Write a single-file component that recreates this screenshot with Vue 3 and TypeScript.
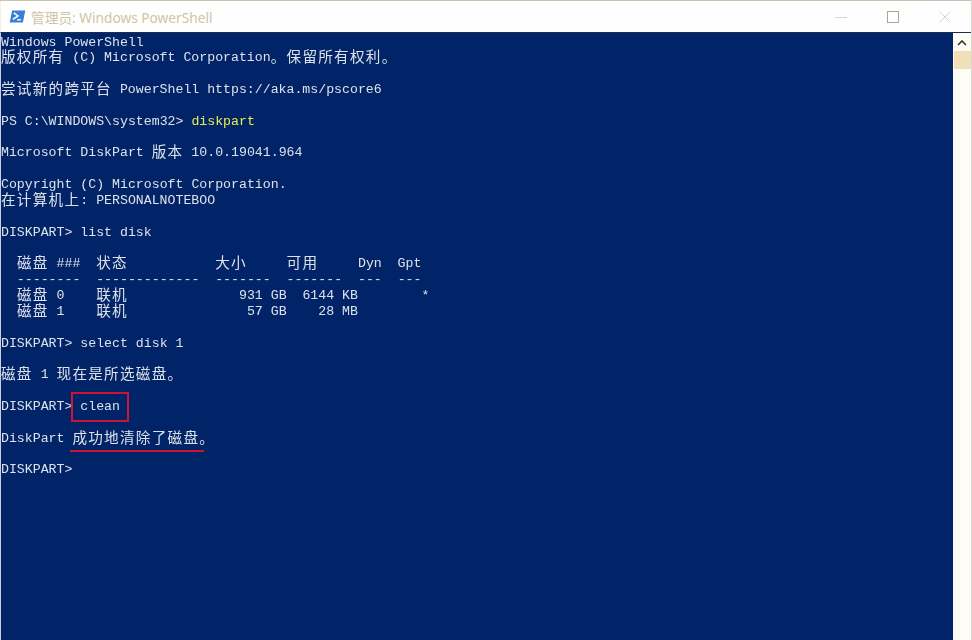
<script setup lang="ts">
type Run = { t: string; cjk?: boolean; y?: boolean };
const raw: string[] = [
  "Windows PowerShell",
  "版权所有 (C) Microsoft Corporation。保留所有权利。",
  "",
  "尝试新的跨平台 PowerShell https://aka.ms/pscore6",
  "",
  "PS C:\\WINDOWS\\system32> §diskpart",
  "",
  "Microsoft DiskPart 版本 10.0.19041.964",
  "",
  "Copyright (C) Microsoft Corporation.",
  "在计算机上: PERSONALNOTEBOO",
  "",
  "DISKPART> list disk",
  "",
  "  磁盘 ###  状态           大小     可用     Dyn  Gpt",
  "  --------  -------------  -------  -------  ---  ---",
  "  磁盘 0    联机              931 GB  6144 KB        *",
  "  磁盘 1    联机               57 GB    28 MB",
  "",
  "DISKPART> select disk 1",
  "",
  "磁盘 1 现在是所选磁盘。",
  "",
  "DISKPART> clean",
  "",
  "DiskPart 成功地清除了磁盘。",
  "",
  "DISKPART>",
];
function parse(line: string): Run[] {
  const runs: Run[] = [];
  let yellow = false;
  for (const part of line.split(/(§|[\u3000-\u303f\u4e00-\u9fff]+)/)) {
    if (!part) continue;
    if (part === "§") { yellow = true; continue; }
    runs.push({ t: part, cjk: /^[\u3000-\u303f\u4e00-\u9fff]/.test(part), y: yellow });
  }
  return runs;
}
const lines = raw.map(parse);
</script>

<template>
  <div class="window">
    <div class="speckle"></div>
    <header class="titlebar">
      <svg class="app-icon" width="17" height="13" viewBox="0 0 18 14">
        <path d="M3.2 0.5H17.4L14.8 13.5H0.6Z" fill="#3a7fd6" />
        <path d="M5 3l4.6 3.4L4 10.2" fill="none" stroke="#fff" stroke-width="1.6" />
        <path d="M8.6 10.6h4" stroke="#fff" stroke-width="1.5" />
      </svg>
      <span class="title">管理员: Windows PowerShell</span>
      <div class="controls">
        <span class="ctl"><svg width="14" height="14" viewBox="0 0 14 14"><path d="M1 7.5h12" stroke="#d9d4c4" stroke-width="1" /></svg></span>
        <span class="ctl"><svg width="14" height="14" viewBox="0 0 14 14"><rect x="1.5" y="1.5" width="11" height="11" fill="none" stroke="#a8a696" stroke-width="1" /></svg></span>
        <span class="ctl"><svg width="14" height="14" viewBox="0 0 14 14"><path d="M1.5 1.5l11 11M12.5 1.5l-11 11" stroke="#d9d4c4" stroke-width="1" /></svg></span>
      </div>
    </header>
    <main class="body">
      <div class="terminal">
        <div v-for="(runs, i) in lines" :key="i" class="line">
          <span v-for="(r, j) in runs" :key="j" class="run" :class="{ cjk: r.cjk, yellow: r.y }">{{ r.t }}</span>
        </div>
        <div class="box"></div>
        <div class="underline"></div>
      </div>
      <aside class="scrollbar">
        <svg class="arrow" width="10" height="6" viewBox="0 0 10 6"><path d="M1 5l4-4 4 4" fill="none" stroke="#333" stroke-width="1.6" /></svg>
        <div class="thumb"></div>
      </aside>
    </main>
  </div>
</template>

<style>
html, body { margin: 0; background: #fff; }
</style>

<style scoped>
.window {
  width: 972px;
  height: 640px;
  display: flex;
  flex-direction: column;
  overflow: hidden;
  background: #fff;
  box-sizing: border-box;
  border-right: 1px solid #d8d8d0;
}
.speckle {
  height: 1px;
  flex: none;
  background: #c9c3b2;
}
.titlebar {
  height: 32px;
  flex: none;
  display: flex;
  align-items: center;
  padding-left: 9px;
  box-sizing: border-box;
  background: #fefefe;
  border-left: 1px solid #f3efe2;
  border-bottom: 1px solid #1b2c52;
}
.app-icon { flex: none; margin-left: -1px; }
.title {
  margin-left: 5px;
  font: 13.7px "Noto Sans", "Noto Sans CJK SC", sans-serif;
  color: #cdc6a4;
  white-space: pre;
}
.controls {
  margin-left: auto;
  display: flex;
}
.ctl {
  width: 52px;
  height: 31px;
  display: flex;
  align-items: center;
  justify-content: center;
}
.body {
  flex: 1;
  min-height: 0;
  display: flex;
}
.terminal {
  position: relative;
  flex: 1;
  min-width: 0;
  padding-top: 1.5px;
  background: #012367;
  border-left: 1px solid #c8d0de;
  color: #dde2ea;
  font-family: "Liberation Mono", "Noto Sans CJK SC", monospace;
  font-size: 13.22px;
  filter: blur(0.3px);
}
.line {
  height: 15.85px;
  line-height: 15.85px;
  white-space: pre;
}
.run {
  display: inline-block;
  height: 15.85px;
  line-height: 15.85px;
  vertical-align: top;
}
.cjk {
  font-family: "Noto Sans CJK SC", sans-serif;
  font-size: 14.6px;
  letter-spacing: 1.26px;
  line-height: 12px;
}
.yellow { color: #e6ee58; }
.box {
  position: absolute;
  left: 70px;
  top: 359px;
  width: 54px;
  height: 26px;
  border: 2px solid #cc1533;
}
.underline {
  position: absolute;
  left: 69px;
  top: 417px;
  width: 134px;
  height: 2px;
  background: #cc1533;
}
.scrollbar {
  width: 18px;
  flex: none;
  background: #fdfdf6;
  display: flex;
  flex-direction: column;
  align-items: center;
}
.arrow { margin-top: 7px; flex: none; }
.thumb {
  width: 17px;
  height: 18px;
  margin-top: 5px;
  background: #f2dfb8;
}
</style>
